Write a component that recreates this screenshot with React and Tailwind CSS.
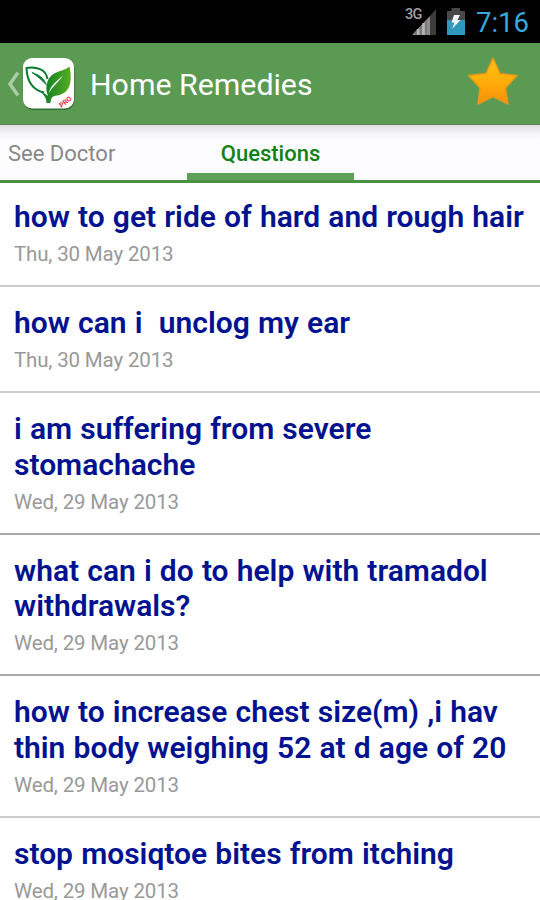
const questions = [
  { lines: ['how to get ride of hard and rough hair'], date: 'Thu, 30 May 2013' },
  { lines: ['how can i  unclog my ear'], date: 'Thu, 30 May 2013' },
  { lines: ['i am suffering from severe', 'stomachache'], date: 'Wed, 29 May 2013', darkRule: true },
  { lines: ['what can i do to help with tramadol', 'withdrawals?'], date: 'Wed, 29 May 2013', darkRule: true },
  { lines: ['how to increase chest size(m) ,i hav', 'thin body weighing 52 at d age of 20'], date: 'Wed, 29 May 2013' },
  { lines: ['stop mosiqtoe bites from itching'], date: 'Wed, 29 May 2013' },
]

function SignalIcon() {
  return (
    <svg className="h-[30px] w-8" viewBox="0 0 32 30" aria-hidden="true">
      <path d="M7 29L25 10V29Z" fill="#8c8c8c" />
      <path d="M13 23V29M18.5 17V29" stroke="#b5b5b5" strokeWidth="2.5" />
      <path d="M25 10L31 3V29H25Z" fill="#3c3c3c" />
      <path d="M11 25V29M16 20V29M21 14V29" stroke="#666" strokeWidth="1" />
    </svg>
  )
}

function BatteryIcon() {
  return (
    <svg className="h-[27px] w-[18px]" viewBox="0 0 18 27" aria-hidden="true">
      <path d="M4.5 0H13V3H18V12H0V3H4.5Z" fill="#484848" />
      <path d="M0 12H18V27H0Z" fill="#3097bd" />
      <path d="M7 7H13L10.5 12H13.5L5 21L7.5 14.5H4.5Z" fill="#f4f8fa" />
    </svg>
  )
}

function StatusBar() {
  return (
    <div className="flex h-[43px] items-start justify-end bg-black pr-[11px]">
      <div className="relative mt-[6px]">
        <SignalIcon />
        <span className="absolute left-0 top-[2px] text-[14.5px] leading-none font-medium tracking-[-0.8px] text-[#a0a0a0]">3G</span>
      </div>
      <div className="ml-[10px] mt-[8px]">
        <BatteryIcon />
      </div>
      <span className="ml-[11px] mt-[6px] text-[27.5px] leading-[33px] text-[#35aadc]">7:16</span>
    </div>
  )
}

function LeafLogo() {
  return (
    <svg className="h-[54px] w-[54px]" viewBox="0 0 54 54" aria-hidden="true">
      <defs>
        <linearGradient id="leaf" x1="0" y1="0" x2="1" y2="0">
          <stop offset="0" stopColor="#067a25" />
          <stop offset="1" stopColor="#58ad21" />
        </linearGradient>
      </defs>
      <rect x="1.5" y="2" width="51" height="51" rx="9" fill="#356d34" />
      <rect x="1" y="1" width="51" height="50.5" rx="9" fill="#fff" />
      <path
        d="M22 35.500C11 33 5 24 4.500 11C14 9.500 24 12 25.500 22"
        fill="none"
        stroke="#087a30"
        strokeWidth="2"
        strokeLinejoin="round"
      />
      <path d="M10 15.500C17 18 22 21 24 27.500C19 22 15 19 10 15.500Z" fill="#087a30" stroke="#087a30" strokeWidth="1" />
      <path d="M47.500 9.500C50 22 50 36 35 38.500C31 39 29 40 28.500 46H24.500C24.500 41 22.500 39 19 35C23 36.500 25 38 26 39C23 32 24 24 29 19C34 14 42 14 47.500 9.500Z" fill="url(#leaf)" />
      <path d="M41 18.500C37 25 31.500 28 27 36C28 29 34 25 41 18.500Z" fill="#fff" />
      <text x="39.500" y="51" transform="rotate(-38 39.500 51)" fill="#e02b40" fontSize="7" fontWeight="700">
        PRO
      </text>
    </svg>
  )
}

function StarIcon() {
  return (
    <svg className="mb-[5px] h-[50px] w-[52px]" viewBox="0 0 52 50" aria-hidden="true">
      <defs>
        <linearGradient id="star" x1="0" y1="0" x2="0" y2="1">
          <stop offset="0" stopColor="#ffc21a" />
          <stop offset="0.500" stopColor="#ffae08" />
          <stop offset="1" stopColor="#f78f0c" />
        </linearGradient>
      </defs>
      <path
        d="M26 2L33 17.500L50 19.500L38.500 32L41 48L26 40.500L11 48L13 32L1.500 19.500L19 17.500Z"
        fill="url(#star)"
        stroke="#e79a18"
        strokeWidth="1.500"
        strokeLinejoin="round"
      />
    </svg>
  )
}

function ActionBar() {
  return (
    <header className="flex h-[82px] items-center border-b border-[#568650] bg-[#5b9a53] pl-[7px] pr-[21px]">
      <svg className="h-[26px] w-[14px]" viewBox="0 0 14 26" aria-hidden="true">
        <path d="M11 1.500L3 13L11 24.500" fill="none" stroke="#a7cda0" strokeWidth="3.500" />
      </svg>
      <div className="ml-px">
        <LeafLogo />
      </div>
      <h1 className="ml-[14px] flex-1 pt-[2px] text-[30.3px] leading-[36px] whitespace-nowrap text-white">Home Remedies</h1>
      <StarIcon />
    </header>
  )
}

function Tabs() {
  return (
    <nav className="flex h-[58px] border-b-[3px] border-[#4a9141] bg-linear-to-b from-[#dedede] via-[#f4f3f5] via-15% to-[#fdfcff] to-30%">
      <span className="w-[187px] pl-[8px] pt-[15px] text-[22px] leading-[28px] whitespace-nowrap text-[#888]">See Doctor</span>
      <div className="flex h-[55px] w-[167px] flex-col justify-between">
        <span className="pt-[15px] text-center text-[22px] leading-[28px] font-medium text-[#128012]">Questions</span>
        <span className="h-[7px] bg-[#609f57]" />
      </div>
    </nav>
  )
}

function QuestionRow({ question }) {
  const rule = question.darkRule ? 'border-[#a8aaa8]' : 'border-[#cbcccb]'

  return (
    <li className={`border-b-2 pl-[14px] pt-[17.6px] pb-[17.7px] first:pt-[16px] ${rule}`}>
      <h2 className="text-[30px] leading-[35.6px] font-semibold whitespace-pre text-[#00128f] [word-spacing:0.7px]">
        {question.lines.map((line) => (
          <span className="block" key={line}>{line}</span>
        ))}
      </h2>
      <p className="mt-[7.7px] text-[20.5px] leading-[25.4px] tracking-[-0.15px] text-[#999]">{question.date}</p>
    </li>
  )
}

export default function App() {
  return (
    <main className="h-[900px] w-[540px] overflow-hidden bg-white font-['Roboto',sans-serif]">
      <StatusBar />
      <ActionBar />
      <Tabs />
      <ul>
        {questions.map((question) => (
          <QuestionRow key={question.lines[0]} question={question} />
        ))}
      </ul>
    </main>
  )
}
